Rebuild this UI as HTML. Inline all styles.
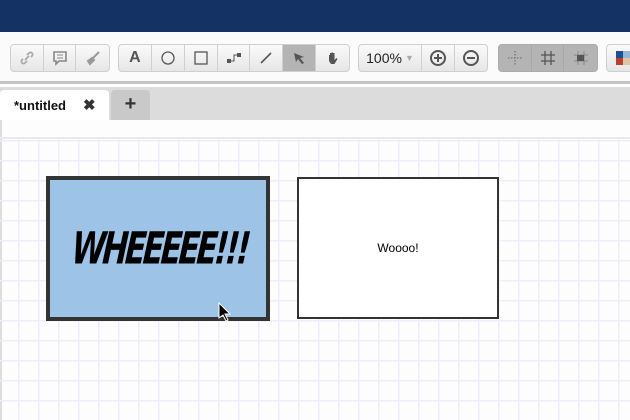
<!DOCTYPE html><html><head><style>
*{margin:0;padding:0;box-sizing:border-box}
body{width:630px;height:420px;overflow:hidden;position:relative;font-family:"Liberation Sans",sans-serif;background:#fff}
.nav{position:absolute;left:0;top:0;width:630px;height:32px;background:#143263}
.tb{position:absolute;left:0;top:32px;width:630px;height:52px;background:#fbfbfb;border-bottom:3px solid #c4c4c4}
.g{position:absolute;top:44px;height:28px;border:1px solid #cfcfcf;border-radius:4px;background:linear-gradient(#fafafa,#e6e6e6);display:flex}
.g div{width:33px;height:26px;border-right:1px solid #d0d0d0;display:flex;align-items:center;justify-content:center;color:#555;font-size:15px}
.g div:last-child{border-right:none}
.tabs{position:absolute;left:0;top:87px;width:630px;height:33px;background:#dcdcdc}
.canvas{position:absolute;left:0;top:120px;width:630px;height:300px;background:#fdfdfd;border-left:2px solid #ddd}
.grid{position:absolute;left:0;top:137px;width:630px;height:283px;border-top:2px solid #e8e8f0;
background-image:linear-gradient(to right,#eeedfb 1.5px,transparent 1.5px),linear-gradient(to bottom,#eeedfb 1.5px,transparent 1.5px);
background-size:20px 20px;background-position:18px 0,0 1px}
</style></head><body>
<div class="nav"></div>
<div class="tb"></div>
<div class="g" style="left:10px;width:100px"><div><svg width="16" height="16" viewBox="0 0 16 16"><path d="M6 10l4-4M4 9l-1 1a2 2 0 003 3l2-2M12 7l1-1a2 2 0 00-3-3L8 5" stroke="#aaa" stroke-width="1.8" fill="none"/></svg></div><div><svg width="16" height="16"><path d="M2 2h12v9H7l-3 3v-3H2z" stroke="#888" stroke-width="1.6" fill="none"/><path d="M5 5h6M5 8h6" stroke="#888"/></svg></div><div><svg width="16" height="16"><path d="M14 2l-6 6M7 8l-4 3 2 3 4-4z" stroke="#999" stroke-width="2" fill="#999"/></svg></div></div>
<div class="g" style="left:118px;width:232px"><div style="font-weight:bold;font-size:16px">A</div><div><svg width="16" height="16"><circle cx="8" cy="8" r="6" stroke="#555" stroke-width="1.3" fill="none"/></svg></div><div><svg width="16" height="16"><rect x="2" y="2" width="12" height="12" stroke="#555" stroke-width="1.3" fill="none"/></svg></div><div><svg width="16" height="16"><rect x="1" y="9" width="4" height="4" fill="#555"/><rect x="11" y="3" width="4" height="4" fill="#555"/><path d="M5 11h3V5h3" stroke="#555" fill="none"/></svg></div><div><svg width="16" height="16"><path d="M3 13L13 3" stroke="#555" stroke-width="1.6"/></svg></div><div style="background:#b4b4b4"><svg width="16" height="16"><path d="M3 3l10 4-4 1 4 5-2 1-4-5-2 3z" fill="#555"/></svg></div><div><svg width="16" height="16"><path d="M4 9V5h1v4V3h1.5v6V2.5H8V9V3h1.5v7l2-2 1 1-3 5H6l-2-3z" fill="#555"/></svg></div></div>
<div class="g" style="left:358px;width:130px"><div style="width:64px;font-size:14px;color:#222">100% <span style="color:#aaa;font-size:9px;margin-left:3px">▼</span></div><div><svg width="18" height="18"><circle cx="9" cy="9" r="7" stroke="#555" stroke-width="2" fill="none"/><path d="M5 9h8M9 5v8" stroke="#555" stroke-width="2"/></svg></div><div><svg width="18" height="18"><circle cx="9" cy="9" r="7" stroke="#555" stroke-width="2" fill="none"/><path d="M5 9h8" stroke="#555" stroke-width="2"/></svg></div></div>
<div class="g" style="left:498px;width:100px;background:#b4b4b4;border-color:#aaa"><div style="border-color:#a8a8a8"><svg width="16" height="16"><path d="M8 1v14M1 8h14" stroke="#666" stroke-dasharray="1.5 1.5"/></svg></div><div style="border-color:#a8a8a8"><svg width="16" height="16"><path d="M5 1v14M11 1v14M1 5h14M1 11h14" stroke="#555" stroke-width="1.3"/></svg></div><div><svg width="16" height="16"><path d="M5 1v14M11 1v14M1 5h14M1 11h14" stroke="#888"/><rect x="4" y="5" width="7" height="6" fill="#555"/></svg></div></div>
<div class="g" style="left:606px;width:40px"><div><svg width="18" height="16"><rect x="1" y="1" width="7" height="7" fill="#1b4f8f"/><rect x="8" y="1" width="7" height="7" fill="#95b7d6"/><rect x="1" y="8" width="7" height="7" fill="#b5412f"/><rect x="8" y="8" width="7" height="7" fill="#e0c3a6"/></svg></div></div>
<div class="tabs"></div>
<div style="position:absolute;left:0;top:90px;width:109px;height:30px;background:#fff;border-radius:4px 4px 0 0"></div>
<div style="position:absolute;left:14px;top:98px;font-size:13px;font-weight:bold;color:#111">*untitled</div>
<div style="position:absolute;left:83px;top:96px;font-size:15px;font-weight:bold;color:#333">✖</div>
<div style="position:absolute;left:111px;top:90px;width:39px;height:30px;background:#c9c9c9;border-radius:4px 4px 0 0;text-align:center;font-size:20px;font-weight:bold;color:#333;line-height:28px">+</div>
<div class="canvas"></div>
<div class="grid"></div>
<div style="position:absolute;left:46px;top:176px;width:224px;height:145px;background:#9dc3e6;border:4px solid #333;display:flex;align-items:center;justify-content:center">
<span style="display:inline-block;font-family:'DejaVu Sans Condensed','DejaVu Sans',sans-serif;font-weight:bold;font-style:italic;font-size:34px;letter-spacing:-3px;color:#000;transform:scale(1,1.3) skewX(-6deg);margin-left:4px">WHEEEEE!!!</span></div>
<svg style="position:absolute;left:218px;top:302px" width="14" height="20"><path d="M1 1v15l4-3 3 6 2-1-3-6h5z" fill="#000" stroke="#fff" stroke-width="1"/></svg>
<div style="position:absolute;left:297px;top:177px;width:202px;height:142px;background:#fff;border:2px solid #333;display:flex;align-items:center;justify-content:center;font-size:12px;color:#000">Woooo!</div>
</body></html>
